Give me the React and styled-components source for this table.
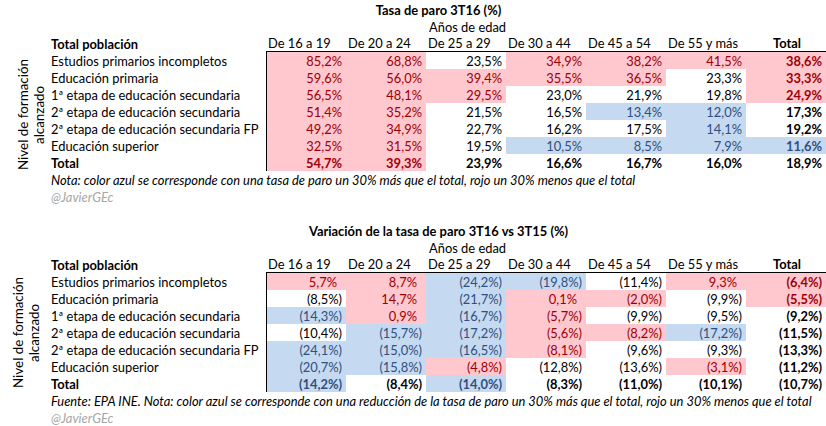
import React from 'react'
import styled, { createGlobalStyle } from 'styled-components'

const GlobalStyle = createGlobalStyle`
  body {
    margin: 0;
    background: #ffffff;
    font-family: Lato, "Liberation Sans", sans-serif;
    font-size: 12.9px;
    color: #000000;
  }
`;

const Page = styled.div`
  width: 826px;
  padding-top: 1px;
  display: flex;
  flex-direction: column;
  gap: 17px;
`;

const Sheet = styled.section`
  display: grid;
  grid-template-columns: 51px 215px repeat(7, 80px);
  grid-auto-rows: 17px;
  line-height: 18px;
  white-space: nowrap;
`;

const Title = styled.div`
  grid-column: 2 / 10;
  text-align: center;
  font-weight: bold;
`;

const AgeCaption = styled.div`
  grid-column: 5 / 7;
  padding-left: 3px;
`;

const SideLabel = styled.div`
  grid-column: 1;
  grid-row: 4 / 11;
  display: flex;
  align-items: center;
  justify-content: center;
  padding-left: ${p => p.$nudge || 0}px;
  padding-top: ${p => p.$drop || 0}px;
  span {
    writing-mode: vertical-rl;
    transform: rotate(180deg);
    text-align: center;
    line-height: 16px;
    font-size: 13.4px;
  }
`;

const RowLabel = styled.div`
  grid-column: 2;
  font-weight: ${p => (p.$bold ? 'bold' : 'normal')};
`;

const ColHead = styled.div`
  box-sizing: border-box;
  border-bottom: 1px solid #000;
  line-height: 17px;
  padding-left: 2px;
  text-align: ${p => (p.$center ? 'center' : 'left')};
  font-weight: ${p => (p.$center ? 'bold' : 'normal')};
`;

const tones = {
  p: { bg: '#ffc7ce', fg: '#9c0006' },
  b: { bg: '#c5d9f1', fg: '#2f5080' },
  '': { bg: 'transparent', fg: '#000000' },
};

const DataCell = styled.div`
  box-sizing: border-box;
  text-align: right;
  padding-right: ${p => (p.$pos ? 9 : 4)}px;
  background: ${p => tones[p.$tone].bg};
  color: ${p => tones[p.$tone].fg};
  font-weight: ${p => (p.$bold ? 'bold' : 'normal')};
  border-left: ${p => (p.$first ? '1px solid #000' : 'none')};
`;

const Note = styled.div`
  grid-column: 2 / 10;
  font-style: italic;
`;

const Handle = styled.div`
  grid-column: 2 / 10;
  font-style: italic;
  color: #a6a6a6;
`;

const ages = ['De 16 a 19', 'De 20 a 24', 'De 25 a 29', 'De 30 a 44', 'De 45 a 54', 'De 55 y más'];

const paro = [
  ['Estudios primarios incompletos', [['85,2%', 'p'], ['68,8%', 'p'], ['23,5%', ''], ['34,9%', 'p'], ['38,2%', 'p'], ['41,5%', 'p'], ['38,6%', 'p']]],
  ['Educación primaria', [['59,6%', 'p'], ['56,0%', 'p'], ['39,4%', 'p'], ['35,5%', 'p'], ['36,5%', 'p'], ['23,3%', ''], ['33,3%', 'p']]],
  ['1ª etapa de educación secundaria', [['56,5%', 'p'], ['48,1%', 'p'], ['29,5%', 'p'], ['23,0%', ''], ['21,9%', ''], ['19,8%', ''], ['24,9%', 'p']]],
  ['2ª etapa de educación secundaria', [['51,4%', 'p'], ['35,2%', 'p'], ['21,5%', ''], ['16,5%', ''], ['13,4%', 'b'], ['12,0%', 'b'], ['17,3%', '']]],
  ['2ª etapa de educación secundaria FP', [['49,2%', 'p'], ['34,9%', 'p'], ['22,7%', ''], ['16,2%', ''], ['17,5%', ''], ['14,1%', 'b'], ['19,2%', '']]],
  ['Educación superior', [['32,5%', 'p'], ['31,5%', 'p'], ['19,5%', ''], ['10,5%', 'b'], ['8,5%', 'b'], ['7,9%', 'b'], ['11,6%', 'b']]],
  ['Total', [['54,7%', 'p'], ['39,3%', 'p'], ['23,9%', ''], ['16,6%', ''], ['16,7%', ''], ['16,0%', ''], ['18,9%', '']]],
];

const variacion = [
  ['Estudios primarios incompletos', [['5,7%', 'p'], ['8,7%', 'p'], ['(24,2%)', 'b'], ['(19,8%)', 'b'], ['(11,4%)', ''], ['9,3%', 'p'], ['(6,4%)', 'p']]],
  ['Educación primaria', [['(8,5%)', ''], ['14,7%', 'p'], ['(21,7%)', 'b'], ['0,1%', 'p'], ['(2,0%)', 'p'], ['(9,9%)', ''], ['(5,5%)', 'p']]],
  ['1ª etapa de educación secundaria', [['(14,3%)', 'b'], ['0,9%', 'p'], ['(16,7%)', 'b'], ['(5,7%)', 'p'], ['(9,9%)', ''], ['(9,5%)', ''], ['(9,2%)', '']]],
  ['2ª etapa de educación secundaria', [['(10,4%)', ''], ['(15,7%)', 'b'], ['(17,2%)', 'b'], ['(5,6%)', 'p'], ['(8,2%)', 'p'], ['(17,2%)', 'b'], ['(11,5%)', '']]],
  ['2ª etapa de educación secundaria FP', [['(24,1%)', 'b'], ['(15,0%)', 'b'], ['(16,5%)', 'b'], ['(8,1%)', 'p'], ['(9,6%)', ''], ['(9,3%)', ''], ['(13,3%)', '']]],
  ['Educación superior', [['(20,7%)', 'b'], ['(15,8%)', 'b'], ['(4,8%)', 'p'], ['(12,8%)', ''], ['(13,6%)', ''], ['(3,1%)', 'p'], ['(11,2%)', '']]],
  ['Total', [['(14,2%)', 'b'], ['(8,4%)', ''], ['(14,0%)', 'b'], ['(8,3%)', ''], ['(11,0%)', ''], ['(10,1%)', ''], ['(10,7%)', '']]],
];

const Table = ({ title, rows, note, accounting, nudge, drop }) => (
  <Sheet>
    <Title>{title}</Title>
    <AgeCaption>Años de edad</AgeCaption>
    <RowLabel $bold>Total población</RowLabel>
    {ages.map(a => <ColHead key={a}>{a}</ColHead>)}
    <ColHead $center>Total</ColHead>
    <SideLabel $nudge={nudge} $drop={drop}>
      <span>Nivel de formación<br />alcanzado</span>
    </SideLabel>
    {rows.map(([label, cells], r) => {
      const isTotal = r === rows.length - 1;
      return (
        <React.Fragment key={label}>
          <RowLabel $bold={isTotal}>{label}</RowLabel>
          {cells.map(([v, tone], c) => (
            <DataCell
              key={c}
              $tone={tone}
              $first={c === 0}
              $bold={isTotal || c === cells.length - 1}
              $pos={accounting && !v.startsWith('(')}
            >
              {v}
            </DataCell>
          ))}
        </React.Fragment>
      );
    })}
    <Note>{note}</Note>
    <Handle>@JavierGEc</Handle>
  </Sheet>
);

export default function App() {
  return (
    <>
      <GlobalStyle />
      <Page>
        <Table
          title="Tasa de paro 3T16 (%)"
          rows={paro}
          nudge={10}
          drop={6}
          note="Nota: color azul se corresponde con una tasa de paro un 30% más que el total, rojo un 30% menos que el total"
        />
        <Table
          title="Variación de la tasa de paro 3T16 vs 3T15 (%)"
          rows={variacion}
          accounting
          note="Fuente: EPA INE. Nota: color azul se corresponde con una reducción de la tasa de paro un 30% más que el total, rojo un 30% menos que el total"
        />
      </Page>
    </>
  );
}
